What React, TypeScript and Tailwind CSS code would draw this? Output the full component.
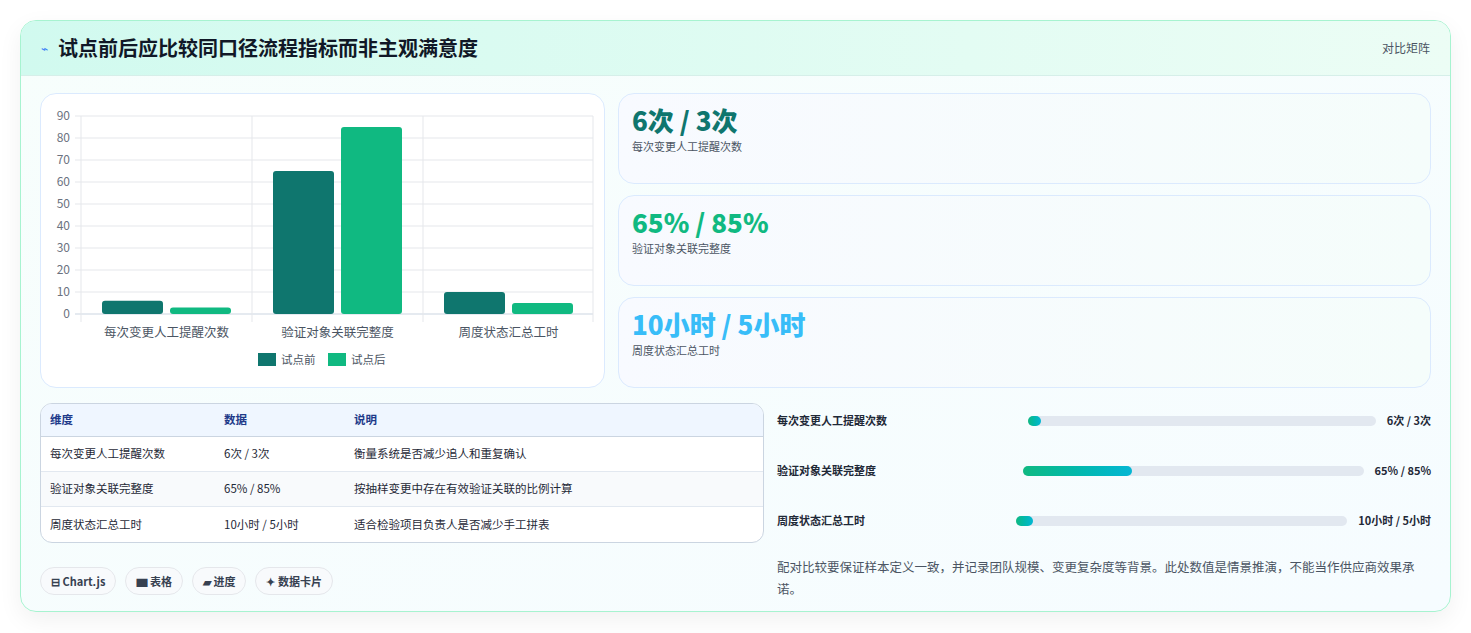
const font = { fontFamily: '"Noto Sans CJK SC", "Noto Sans", sans-serif' };

const cats = [
  { name: "每次变更人工提醒次数", a: 6, b: 3 },
  { name: "验证对象关联完整度", a: 65, b: 85 },
  { name: "周度状态汇总工时", a: 10, b: 5 },
];

function Chart() {
  const y0 = 220;
  const k = 22 / 10;
  return (
    <svg width="564" height="294" viewBox="0 0 564 294">
      {[0, 10, 20, 30, 40, 50, 60, 70, 80, 90].map((v) => (
        <g key={v}>
          <line x1="34" x2="552" y1={y0 - v * k} y2={y0 - v * k} stroke={v === 0 ? "#cbd5e1" : "#e5e7eb"} />
          <text x="29" y={y0 - v * k + 4} textAnchor="end" fontSize="12" fill="#6b7280" style={font}>{v}</text>
        </g>
      ))}
      {[40, 211, 382, 552].map((x) => (
        <line key={x} x1={x} x2={x} y1="22" y2="228" stroke="#e5e7eb" />
      ))}
      {cats.map((c, i) => {
        const x = 40 + i * 171;
        return (
          <g key={c.name}>
            <rect x={x + 21} y={y0 - c.a * k} width="61" height={c.a * k} rx="3" fill="#0f766e" />
            <rect x={x + 89} y={y0 - c.b * k} width="61" height={c.b * k} rx="3" fill="#10b981" />
            <text x={x + 85.5} y="243" textAnchor="middle" fontSize="12.5" fill="#4b5563" style={font}>{c.name}</text>
          </g>
        );
      })}
      <rect x="217" y="259" width="18" height="13" fill="#0f766e" />
      <text x="240" y="270" fontSize="11.5" fill="#4b5563" style={font}>试点前</text>
      <rect x="287" y="259" width="18" height="13" fill="#10b981" />
      <text x="310" y="270" fontSize="11.5" fill="#4b5563" style={font}>试点后</text>
    </svg>
  );
}

const stats = [
  { v: "6次 / 3次", l: "每次变更人工提醒次数", c: "text-[#0f766e]" },
  { v: "65% / 85%", l: "验证对象关联完整度", c: "text-[#10b981]" },
  { v: "10小时 / 5小时", l: "周度状态汇总工时", c: "text-[#38bdf8]" },
];

const rows = [
  ["每次变更人工提醒次数", "6次 / 3次", "衡量系统是否减少追人和重复确认"],
  ["验证对象关联完整度", "65% / 85%", "按抽样变更中存在有效验证关联的比例计算"],
  ["周度状态汇总工时", "10小时 / 5小时", "适合检验项目负责人是否减少手工拼表"],
];

const bars = [
  { l: "每次变更人工提醒次数", v: "6次 / 3次", w: "w-[3.5%]" },
  { l: "验证对象关联完整度", v: "65% / 85%", w: "w-[32%]" },
  { l: "周度状态汇总工时", v: "10小时 / 5小时", w: "w-[5%]" },
];

export default function App() {
  return (
    <div className="min-h-[633px] bg-white px-5 pt-5" style={font}>
      <div className="w-[1431px] h-[592px] rounded-2xl border border-[#a7f3d0] bg-gradient-to-br from-[#f7fefc] to-[#f6fcff] shadow-[0_8px_24px_rgba(0,0,0,0.06)] overflow-hidden">
        <div className="h-[55px] flex items-center justify-between px-5 bg-gradient-to-r from-[#d1faef] to-[#ecfdf5] border-b border-[#d6efe9]">
          <div className="flex items-center gap-2.5">
            <span className="text-[#3b82f6] text-xs">⌁</span>
            <span className="text-[20px] font-bold text-[#111827]">试点前后应比较同口径流程指标而非主观满意度</span>
          </div>
          <span className="text-xs text-[#4b5563]">对比矩阵</span>
        </div>
        <div className="px-[19px] pt-[17px]">
          <div className="flex gap-[13px]">
            <div className="w-[565px] h-[295px] rounded-2xl border border-[#dbeafe] bg-white">
              <Chart />
            </div>
            <div className="flex-1 flex flex-col gap-[11px]">
              {stats.map((s) => (
                <div key={s.l} className="h-[91px] rounded-2xl border border-[#dbeafe] bg-gradient-to-r from-[#f8faff] to-[#f5fdfb] px-[13px] pt-[8px]">
                  <div className={`text-[26px] font-extrabold leading-[36px] ${s.c}`}>{s.v}</div>
                  <div className="text-[11px] text-[#4b5563]">{s.l}</div>
                </div>
              ))}
            </div>
          </div>
          <div className="flex gap-[13px] mt-[15px]">
            <div className="w-[724px]">
              <div className="rounded-xl border border-[#cbd5e1] overflow-hidden text-[11.5px] bg-white">
                <div className="flex h-[33px] items-center bg-[#eff6ff] text-[#1e3a8a] font-semibold border-b border-[#cbd5e1]">
                  <div className="w-[183px] pl-[9px]">维度</div>
                  <div className="w-[130px]">数据</div>
                  <div>说明</div>
                </div>
                {rows.map((r, i) => (
                  <div key={r[0]} className={`flex h-[35px] items-center text-[#1f2937] ${i < 2 ? "border-b border-[#e2e8f0]" : ""} ${i === 1 ? "bg-[#f8fafc]" : ""}`}>
                    <div className="w-[183px] pl-[9px]">{r[0]}</div>
                    <div className="w-[130px]">{r[1]}</div>
                    <div>{r[2]}</div>
                  </div>
                ))}
              </div>
              <div className="flex gap-[9px] mt-[24px] text-[11px] text-[#374151] font-semibold">
                {["⊟ Chart.js", "▆ 表格", "▰ 进度", "✦ 数据卡片"].map((t) => (
                  <span key={t} className="h-[28px] px-[10px] flex items-center rounded-full border border-[#e5e7eb] bg-[#f8fafc]">{t}</span>
                ))}
              </div>
            </div>
            <div className="flex-1">
              <div className="flex flex-col gap-[33px] pt-[9px]">
                {bars.map((b) => (
                  <div key={b.l} className="grid grid-cols-[1fr_1.45fr_auto] gap-[11px] items-center h-[17px]">
                    <span className="text-[11px] text-[#1f2937] font-semibold">{b.l}</span>
                    <div className="h-[10px] rounded-full bg-[#e2e8f0]">
                      <div className={`h-full rounded-full bg-gradient-to-r from-[#10b981] to-[#06b6d4] min-w-[13px] ${b.w}`} />
                    </div>
                    <span className="text-[11px] font-bold text-[#1f2937]">{b.v}</span>
                  </div>
                ))}
              </div>
              <p className="mt-[27px] text-[12.5px] leading-[22px] text-[#4b5563]">配对比较要保证样本定义一致，并记录团队规模、变更复杂度等背景。此处数值是情景推演，不能当作供应商效果承诺。</p>
            </div>
          </div>
        </div>
      </div>
    </div>
  );
}
